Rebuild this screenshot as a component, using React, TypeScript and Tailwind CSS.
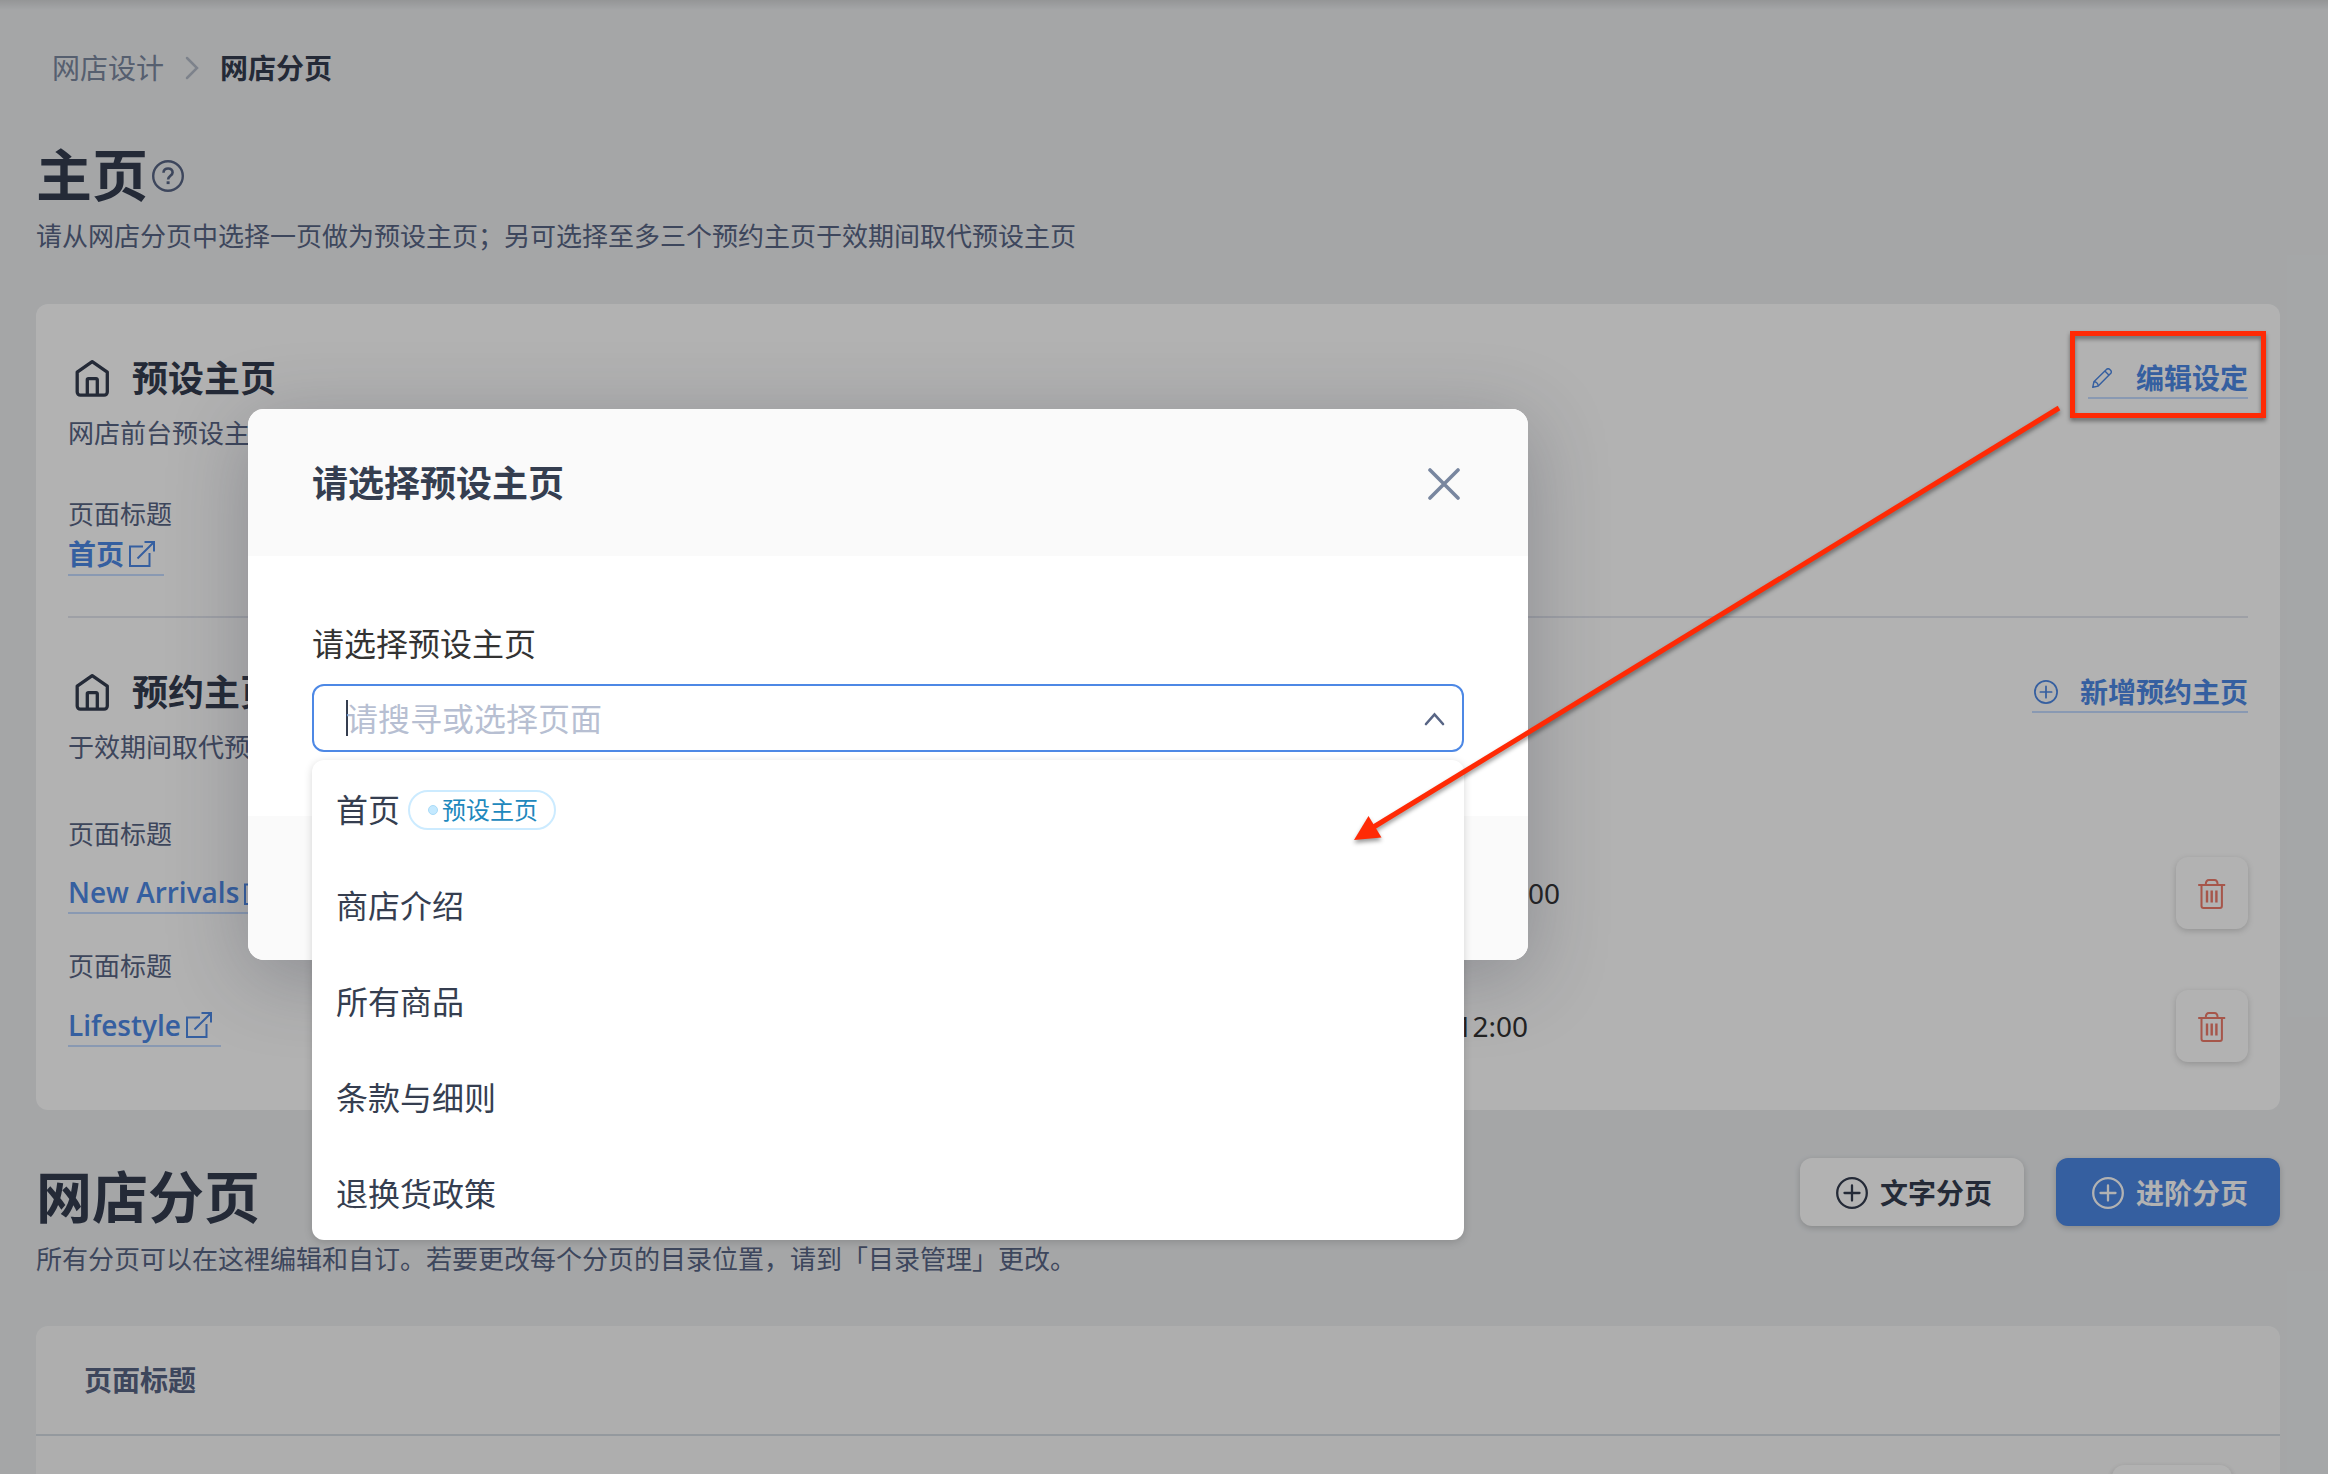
import { ReactNode } from 'react';

const pageOptions = ['首页', '商店介绍', '所有商品', '条款与细则', '退换货政策'];

interface IconProps {
  className?: string;
}

function HomeIcon() {
  return (
    <svg className="w-12 h-12" viewBox="0 0 48 48" fill="none" stroke="currentColor" strokeWidth="3.300" strokeLinejoin="round">
      <path d="M9.200 18.200 24.200 7.700l15.100 10.500V38a3.200 3.200 0 0 1-3.200 3.200H12.400A3.200 3.200 0 0 1 9.200 38z" />
      <path d="M19.300 41V25.800a1.200 1.200 0 0 1 1.200-1.200h7.600a1.200 1.200 0 0 1 1.200 1.200V41" />
    </svg>
  );
}

function HelpIcon() {
  return (
    <svg className="w-8 h-8 text-[#586585]" viewBox="0 0 32 32" fill="none" stroke="currentColor" strokeWidth="2.400">
      <circle cx="16" cy="16" r="14.800" />
      <path d="M11.500 12.800c0-2.800 2-4.300 4.600-4.300s4.500 1.600 4.500 4c0 3.300-4.500 3.400-4.500 7" strokeWidth="2.600" />
      <path d="M16.100 21.300v2.800" strokeWidth="3" />
    </svg>
  );
}

function ExternalIcon() {
  return (
    <svg className="w-7 h-7" viewBox="0 0 28 28" fill="none" stroke="currentColor" strokeWidth="2">
      <path d="M15 6.500H2V26h19.500V13" />
      <path d="M16.500 2H26v9.500M26 2 9.500 18.500" />
    </svg>
  );
}

function PencilIcon() {
  return (
    <svg className="ml-1 w-5 h-5" viewBox="1.500 1.500 21 21" fill="none" stroke="currentColor" strokeWidth="1.500" strokeLinejoin="round">
      <path d="M2.300 21.700l1.200-5.700L16.600 3a2.500 2.500 0 0 1 3.600 0l.8.8a2.500 2.500 0 0 1 0 3.600L8 20.500z" />
      <path d="M3.500 16c2.500 0 4.500 2 4.500 4.500M15 4.600l4.400 4.400" />
    </svg>
  );
}

function PlusCircleIcon({ className = '' }: IconProps) {
  return (
    <svg className={className} viewBox="0 0 32 32" fill="none" stroke="currentColor" strokeWidth="2.300" strokeLinecap="round">
      <circle cx="16" cy="16" r="14.800" />
      <path d="M16 8.500v15M8.500 16h15" />
    </svg>
  );
}

function TrashIcon() {
  return (
    <svg className="w-7 h-8" viewBox="0 0 28 32" fill="none" stroke="currentColor" strokeWidth="2" strokeLinejoin="round">
      <path d="M.2 8h27M7.800 7.500c0-3 1.200-4.500 3.200-4.500h5.400c2 0 3.200 1.500 3.200 4.500" />
      <path d="M3.500 8v21a2 2 0 0 0 2 2h16.400a2 2 0 0 0 2-2V8" />
      <path d="M9 13.500v12M13.700 13.500v12M18.400 13.500v12" strokeWidth="2.400" />
    </svg>
  );
}

function SectionHeading({ title, action }: { title: string; action: ReactNode }) {
  return (
    <div className="flex h-12 items-center justify-between">
      <div className="flex items-center gap-4 text-[#343d50]">
        <HomeIcon />
        <h2 className="h-12 text-4xl leading-[50px] font-bold">{title}</h2>
      </div>
      {action}
    </div>
  );
}

function PageLink({ label }: { label: string }) {
  return (
    <a className="inline-flex h-[42px] items-center gap-1 border-b-2 border-[#c5dcff] pr-2 font-['Open_Sans','Noto_Sans_CJK_SC',sans-serif] text-[28px] leading-[38px] font-semibold text-[#4d88e5]">
      {label}
      <ExternalIcon />
    </a>
  );
}

function ScheduledRow({ label, time, timeWidth }: { label: string; time: string; timeWidth: string }) {
  return (
    <div className="flex h-18 items-center">
      <div className="w-[760px] flex">
        <PageLink label={label} />
      </div>
      <span className={`${timeWidth} text-right text-[28px] leading-10 text-[#333]`}>{time}</span>
      <button className="ml-auto flex h-18 w-18 items-center justify-center rounded-xl bg-white text-[#ee7b6b] shadow-[0_2px_6px_rgba(0,0,0,0.18)]">
        <TrashIcon />
      </button>
    </div>
  );
}

function SelectModal() {
  return (
    <div className="absolute inset-0 bg-black/30 pt-[409px] pl-[248px]">
      <div className="flex h-[551px] w-[1280px] flex-col rounded-2xl bg-white shadow-[0_16px_80px_rgba(40,42,60,0.28)]">
        <div className="flex h-[147px] items-center justify-between rounded-t-2xl bg-[#fafafa] pr-[68px] pl-16">
          <h3 className="h-12 text-4xl leading-[50px] font-bold text-[#353e50]">请选择预设主页</h3>
          <svg className="mt-0.5 w-8 h-8" viewBox="0 0 32 32" stroke="#78869f" strokeWidth="3.600" strokeLinecap="round">
            <path d="M2 2l28 28M30 2 2 30" />
          </svg>
        </div>

        <div className="h-[260px] px-16 pt-16">
          <label className="block h-12 text-[32px] leading-[48px] text-[#333]">请选择预设主页</label>
          <div className="relative mt-4 flex h-[68px] items-center rounded-xl border-2 border-[#4d88e5] bg-white pr-[17px] pl-8">
            <span className="h-9 w-0.5 bg-[#353e50]" />
            <span className="-ml-0.5 h-12 text-[32px] leading-[50px] text-[#b7bfd2]">请搜寻或选择页面</span>
            <svg className="mt-0.5 ml-auto h-3.5 w-[22px]" viewBox="0 0 22 14" fill="none" stroke="#586585" strokeWidth="2.600" strokeLinecap="round">
              <path d="M3 12l8.500-9.500L20 12" />
            </svg>
            <ul className="absolute top-[74px] -left-0.5 h-[480px] w-[1152px] rounded-xl bg-white pt-0.5 shadow-[0_2px_8px_rgba(0,0,0,0.16)]">
              {pageOptions.map((name, index) => (
                <li key={name} className="flex h-24 items-center px-6 text-[32px] leading-[48px] text-[#353e50]">
                  {name}
                  {index === 0 && (
                    <span className="ml-2 flex h-10 items-center gap-1 rounded-full border-2 border-[#ccebff] px-4 text-2xl text-[#2088bd]">
                      <i className="ml-0.5 h-2.5 w-2.5 rounded-full border border-[#a9dbf8] bg-[#c4e9ff]" />
                      预设主页
                    </span>
                  )}
                </li>
              ))}
            </ul>
          </div>
        </div>

        <div className="flex-1 rounded-b-2xl bg-[#fafafa]" />
      </div>
    </div>
  );
}

function Annotation() {
  return (
    <svg className="absolute inset-0 h-[1474px] w-[2328px] drop-shadow-[0_3px_2px_rgba(0,0,0,0.4)]" viewBox="0 0 2328 1474" fill="none">
      <rect x="2072.500" y="333.500" width="191" height="82" stroke="#ff2a05" strokeWidth="5" />
      <path d="M2059 408 1372 828" stroke="#ff2a05" strokeWidth="5" />
      <path d="M1354 840l14.500-24 13 21.500z" fill="#ff2a05" />
    </svg>
  );
}

export default function App() {
  return (
    <div className="relative h-[1474px] w-[2328px] overflow-hidden bg-[#eceef0] pr-12 pl-9 font-['Noto_Sans','Noto_Sans_CJK_SC',sans-serif]">
      <div className="absolute inset-x-0 top-0 h-2.5 bg-linear-to-b from-black/10 to-transparent" />

      <nav className="mt-12 flex h-10 items-center pl-4 text-[28px] leading-10">
        <span className="text-[#7c889f]">网店设计</span>
        <svg className="mx-5 h-6 w-4" viewBox="0 0 16 24" fill="none" stroke="#b4bac8" strokeWidth="2.500" strokeLinecap="round">
          <path d="M3 2l10 10L3 22" />
        </svg>
        <span className="font-bold text-[#343d50]">网店分页</span>
      </nav>

      <div className="mt-14 flex h-16 items-center gap-1">
        <h1 className="h-16 text-[56px] leading-[61px] font-bold text-[#343d50]">主页</h1>
        <HelpIcon />
      </div>
      <p className="mt-[9px] h-10 text-[26px] leading-[39px] text-[#586585]">
        请从网店分页中选择一页做为预设主页；另可选择至多三个预约主页于效期间取代预设主页
      </p>

      <section className="mt-[47px] h-[806px] rounded-xl bg-white px-8 pt-[50px]">
        <SectionHeading
          title="预设主页"
          action={
            <a className="relative -top-px flex h-11 items-center gap-6 border-b-2 border-[#c5dcff] pt-1 text-[28px] font-bold text-[#4d88e5]">
              <PencilIcon />
              编辑设定
            </a>
          }
        />
        <p className="mt-3 h-10 text-[26px] leading-[39px] text-[#586585]">网店前台预设主页</p>
        <p className="mt-[41px] h-10 text-[26px] leading-[39px] text-[#586585]">页面标题</p>
        <div className="-mt-px flex h-[42px]">
          <PageLink label="首页" />
        </div>

        <div className="mt-10 h-0.5 bg-[#e2e6ee]" />

        <div className="mt-[50px]">
          <SectionHeading
            title="预约主页"
            action={
              <a className="relative -top-px flex h-11 items-center gap-[22px] border-b-2 border-[#c5dcff] pt-1 pl-0.5 text-[28px] font-bold text-[#4d88e5]">
                <PlusCircleIcon className="h-6 w-6" />
                新增预约主页
              </a>
            }
          />
        </div>
        <p className="mt-[11px] h-10 text-[26px] leading-10 text-[#586585]">于效期间取代预设主页</p>
        <p className="mt-12 h-10 text-[26px] leading-[39px] text-[#586585]">页面标题</p>
        <div className="mt-0.5">
          <ScheduledRow label="New Arrivals" time="12:00" timeWidth="w-[732px]" />
        </div>
        <p className="mt-[18px] h-10 text-[26px] leading-[39px] text-[#586585]">页面标题</p>
        <div className="mt-[3px]">
          <ScheduledRow label="Lifestyle" time="12:00" timeWidth="w-[700px]" />
        </div>
      </section>

      <div className="mt-12 flex items-start justify-between">
        <div className="pt-2">
          <h1 className="h-16 text-[56px] leading-[61px] font-bold text-[#343d50]">网店分页</h1>
          <p className="mt-[9px] h-10 text-[26px] leading-10 text-[#586585]">
            所有分页可以在这裡编辑和自订。若要更改每个分页的目录位置，请到「目录管理」更改。
          </p>
        </div>
        <div className="flex gap-8">
          <button className="flex h-[68px] w-56 items-center gap-3 rounded-xl bg-white pt-0.5 pl-9 text-[28px] font-bold text-[#343d50] shadow-[0_2px_6px_rgba(0,0,0,0.18)]">
            <PlusCircleIcon className="h-8 w-8" />
            文字分页
          </button>
          <button className="flex h-[68px] w-56 items-center gap-3 rounded-xl bg-[#4d88e5] pt-0.5 pl-9 text-[28px] font-bold text-white shadow-[0_2px_6px_rgba(0,0,0,0.18)]">
            <PlusCircleIcon className="h-8 w-8" />
            进阶分页
          </button>
        </div>
      </div>

      <section className="mt-[47px] h-[300px] rounded-t-xl bg-[#fafafa]">
        <div className="flex h-[110px] items-center border-b-2 border-[#d4dce2] pl-12 text-[28px] font-bold text-[#586585]">
          页面标题
        </div>
        <div className="flex justify-end pt-[29px] pr-12">
          <div className="h-[72px] w-[120px] rounded-xl bg-white shadow-[0_2px_6px_rgba(0,0,0,0.18)]" />
        </div>
      </section>

      <SelectModal />
      <Annotation />
    </div>
  );
}
